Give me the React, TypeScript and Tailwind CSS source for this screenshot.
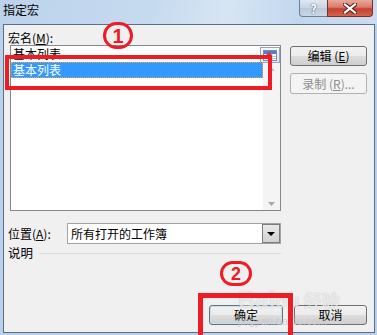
export default function App() {
  const btn =
    "flex items-center justify-center rounded-[3px] border border-[#707070] bg-[linear-gradient(to_bottom,#f2f2f2_0%,#ebebeb_50%,#dddddd_50%,#cfcfcf_100%)] text-[12px] leading-[14px] text-black";
  return (
    <div className="relative w-[377px] h-[335px] overflow-hidden bg-[#b9d1ea] font-['Noto_Sans_CJK_SC',sans-serif] text-[12px] text-black">
      {/* title bar */}
      <div className="h-[24px] flex bg-[linear-gradient(100deg,#bcd3eb_0%,#c6daef_40%,#d6e5f4_60%,#c2d7ee_80%,#c9dcf0_100%)]">
        <div className="pl-[3px] pt-[3px] leading-[14px] text-[12px]">指定宏</div>
        <div className="flex-1" />
        <div className="flex h-[17px] mr-[4px]">
          <div className="w-[28px] h-[17px] rounded-bl-[4px] border border-t-0 border-r-0 border-[#6e7f93] bg-[linear-gradient(to_bottom,#dfe7f1_0%,#c9d5e3_50%,#b9c8da_50%,#c9d7e7_100%)] flex items-center justify-center">
            <span className="text-[13px] font-bold leading-[13px] text-white [text-shadow:0_0_1px_#3a4a5e,0_0_1px_#3a4a5e]">?</span>
          </div>
          <div className="w-[46px] h-[17px] rounded-br-[4px] border border-t-0 border-[#7a2f27] bg-[linear-gradient(to_bottom,#e9a99c_0%,#d97b6a_45%,#c6402f_55%,#d5634e_100%)] flex items-center justify-center">
            <svg width="14" height="11" viewBox="0 0 14 11">
              <path d="M2 1.5 L12 9.5 M12 1.5 L2 9.5" stroke="#5a1c16" strokeWidth="4.2" strokeLinecap="square" />
              <path d="M2 1.5 L12 9.5 M12 1.5 L2 9.5" stroke="#ffffff" strokeWidth="2.2" strokeLinecap="square" />
            </svg>
          </div>
        </div>
      </div>

      {/* body */}
      <div className="ml-[3px] mr-[2px] h-[309px] border border-[#5c6e84] bg-[#f0f0f0] flex flex-col">
        <div className="flex pt-[6px]">
          <div className="flex flex-col pl-[4px]">
            <div className="h-[14px] leading-[14px]">
              宏名(<span className="underline">M</span>):
            </div>
            <div className="ml-[2px] w-[271px] h-[166px] border border-[#828790] bg-white flex flex-col">
              <div className="h-[16px] flex">
                <div className="flex-1 pl-[2px] leading-[16px]">基本列表</div>
                <div className="mt-[1px] w-[20px] h-[16px] border border-[#9aa5b3] bg-[linear-gradient(to_bottom,#f8f8f8,#e2e6ea)] flex items-center justify-center">
                  <svg width="14" height="11" viewBox="0 0 14 11">
                    <rect x="0.5" y="0.5" width="13" height="10" fill="#ffffff" stroke="#6f8fb8" />
                    <rect x="1" y="1" width="12" height="3" fill="#4f7fc4" />
                    <path d="M1 6.5 H13 M1 8.5 H13 M5 4 V10 M9 4 V10" stroke="#9db4d4" strokeWidth="0.8" />
                    <path d="M6 2 L9 5 L7.5 5 L7.5 8 L4.5 8 L4.5 5 L3 5 Z" fill="#e0322a" />
                  </svg>
                </div>
              </div>
              <div className="flex flex-1">
                <div className="flex-1 flex flex-col">
                  <div className="h-[16px] bg-[#3399ff] border border-dotted border-[#f0a33a] text-white leading-[14px] pl-[1px]">
                    基本列表
                  </div>
                </div>
                <div className="w-[17px] mt-[1px] bg-[#f4f4f4] flex flex-col items-center justify-between py-[4px]">
                  <svg width="7" height="4" viewBox="0 0 7 4">
                    <path d="M0 4 L3.5 0 L7 4 Z" fill="#c4c4c4" />
                  </svg>
                  <svg width="7" height="4" viewBox="0 0 7 4">
                    <path d="M0 0 L7 0 L3.5 4 Z" fill="#a8a8a8" />
                  </svg>
                </div>
              </div>
            </div>
          </div>
          <div className="ml-[9px] pt-[15px] flex flex-col gap-[7px]">
            <div className={`${btn} w-[77px] h-[20px]`}>
              编辑 (<span className="underline">E</span>)
            </div>
            <div className="w-[77px] h-[21px] flex items-center justify-center rounded-[3px] border border-[#adb2b5] bg-[#f4f4f4] text-[#8d8d8d] leading-[14px]">
              录制 (<span className="underline">R</span>)...
            </div>
          </div>
        </div>

        {/* position row */}
        <div className="flex items-center mt-[12px] h-[21px]">
          <div className="w-[63px] pl-[4px] leading-[14px]">
            位置(<span className="underline">A</span>):
          </div>
          <div className="w-[214px] h-[21px] border border-[#a3a3a3] bg-white flex">
            <div className="flex-1 pl-[3px] leading-[19px]">所有打开的工作簿</div>
            <div className="w-[18px] h-[19px] border border-[#7c7c7c] bg-[linear-gradient(to_bottom,#e8e8e8,#d2d2d2)] flex items-center justify-center">
              <svg width="8" height="4" viewBox="0 0 8 4">
                <path d="M0 0 L8 0 L4 4 Z" fill="#000000" />
              </svg>
            </div>
          </div>
        </div>

        {/* description row */}
        <div className="flex items-center mt-[2px] h-[14px] w-[277px]">
          <div className="pl-[4px] leading-[14px] text-[12.5px]">说明</div>
          <div className="ml-[6px] flex-1 h-px bg-[#d3dde6]" />
        </div>

        {/* buttons */}
        <div className="flex ml-[205px] gap-[11px] mt-[45px]">
          <div className={`${btn} w-[74px] h-[20px] border-[#3c7fb1] shadow-[inset_0_0_0_1px_#b9e4fa]`}>确定</div>
          <div className={`${btn} w-[73px] h-[20px]`}>取消</div>
        </div>
      </div>

      {/* annotations */}
      <div className="absolute left-[103px] top-[22px] w-[30px] h-[27px] rounded-full border-[3px] border-[#ee1c25] flex items-center justify-center">
        <span className="text-[#ee1c25] text-[20px] font-bold leading-[20px] font-['Liberation_Sans',sans-serif]">1</span>
      </div>
      <div className="absolute left-[5px] top-[55px] w-[267px] h-[35px] border-[4px] border-[#ee1c25]" />

      <div className="absolute left-[238px] top-[288px] text-[24px] font-bold leading-[24px] text-white/70 [text-shadow:0_0_1px_rgba(0,0,0,0.25)] font-['Liberation_Sans',sans-serif]">
        Bai<span className="text-[20px]">du</span>
        <span className="ml-[4px] text-[18px] font-['Noto_Sans_CJK_SC',sans-serif]">经验</span>
      </div>
      <div className="absolute left-[238px] top-[315px] text-[11px] leading-[12px] text-[#c8c8c8]/80 font-['Liberation_Sans',sans-serif]">
        jingyan.baidu.com
      </div>

      <div className="absolute left-[220px] top-[261px] w-[32px] h-[25px] rounded-full border-[3px] border-[#ee1c25] flex items-center justify-center">
        <span className="text-[#ee1c25] text-[18px] font-bold leading-[18px] font-['Liberation_Sans',sans-serif]">2</span>
      </div>
      <div className="absolute left-[198px] top-[293px] w-[95px] h-[50px] border-[5px] border-[#ee1c25]" />
    </div>
  );
}
